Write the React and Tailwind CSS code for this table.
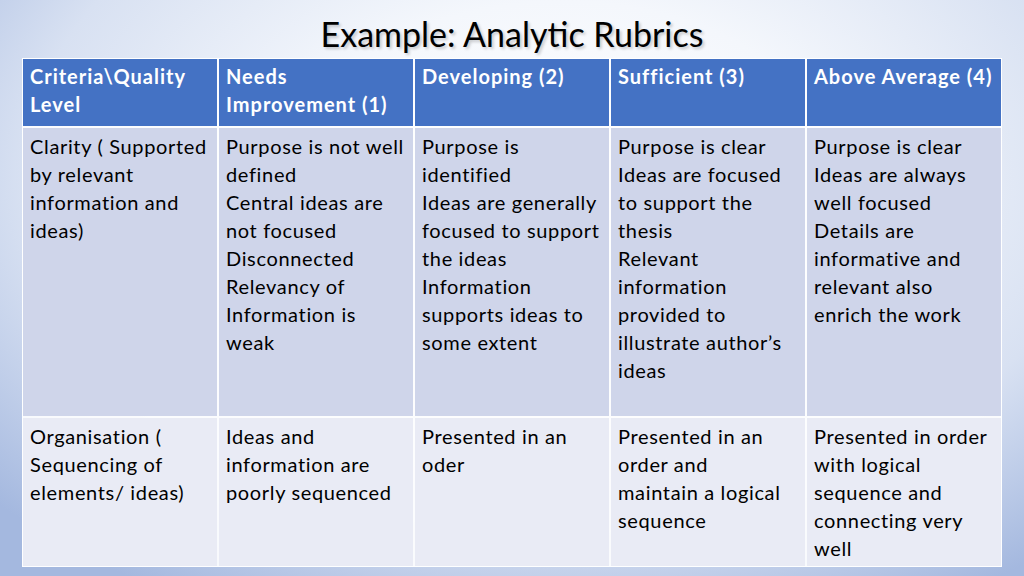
import React from 'react';

const header = [
  ['Criteria\\Quality', 'Level'],
  ['Needs', 'Improvement (1)'],
  ['Developing (2)'],
  ['Sufficient (3)'],
  ['Above Average (4)'],
];

const rows = [
  {
    bg: 'bg-[#cfd5ea]',
    h: 'h-[288px]',
    cells: [
      ['Clarity ( Supported', 'by relevant', 'information and', 'ideas)'],
      ['Purpose is not well', 'defined', 'Central ideas are', 'not focused', 'Disconnected', 'Relevancy of', 'Information is', 'weak'],
      ['Purpose is', 'identified', 'Ideas are generally', 'focused to support', 'the ideas', 'Information', 'supports ideas to', 'some extent'],
      ['Purpose is clear', 'Ideas are focused', 'to support the', 'thesis', 'Relevant', 'information', 'provided to', 'illustrate author’s', 'ideas'],
      ['Purpose is clear', 'Ideas are always', 'well focused', 'Details are', 'informative and', 'relevant also', 'enrich the work'],
    ],
  },
  {
    bg: 'bg-[#e9ebf5]',
    h: 'h-[148px]',
    cells: [
      ['Organisation (', 'Sequencing of', 'elements/ ideas)'],
      ['Ideas and', 'information are', 'poorly sequenced'],
      ['Presented in an', 'oder'],
      ['Presented in an', 'order and', 'maintain a logical', 'sequence'],
      ['Presented in order', 'with logical', 'sequence and', 'connecting very', 'well'],
    ],
  },
];

const Lines = ({ lines }) => (
  <>
    {lines.map((l, i) => (
      <div key={i} className="whitespace-nowrap">{l}</div>
    ))}
  </>
);

export default function App() {
  return (
    <div
      className="w-[1024px] h-[576px] overflow-hidden flex flex-col bg-[radial-gradient(ellipse_75%_85%_at_55%_30%,#ffffff_0%,#f4f7fc_35%,#d8e1f2_70%,#a4b8df_100%)]"
      style={{ fontFamily: 'Lato, "Open Sans", sans-serif' }}
    >
      <div className="h-[58px] flex items-end justify-center">
        <h1 className="text-[34px] leading-[44px] mb-[2px] text-black [text-shadow:2px_2px_3px_rgba(0,0,0,0.2)]">
          Example: Analytic Rubrics
        </h1>
      </div>
      <div className="ml-[22px] w-[980px] bg-white/90 border border-white/90 grid grid-cols-5 gap-[2px] text-[20px] leading-[28px]">
        {header.map((lines, i) => (
          <div key={i} className="bg-[#4472c4] text-white font-bold tracking-[1px] h-[67px] px-[7px] pt-[3px]">
            <Lines lines={lines} />
          </div>
        ))}
        {rows.map((r, ri) =>
          r.cells.map((lines, i) => (
            <div key={`${ri}-${i}`} className={`${r.bg} ${r.h} text-black tracking-[0.65px] px-[7px] pt-[4px]`}>
              <Lines lines={lines} />
            </div>
          ))
        )}
      </div>
    </div>
  );
}
